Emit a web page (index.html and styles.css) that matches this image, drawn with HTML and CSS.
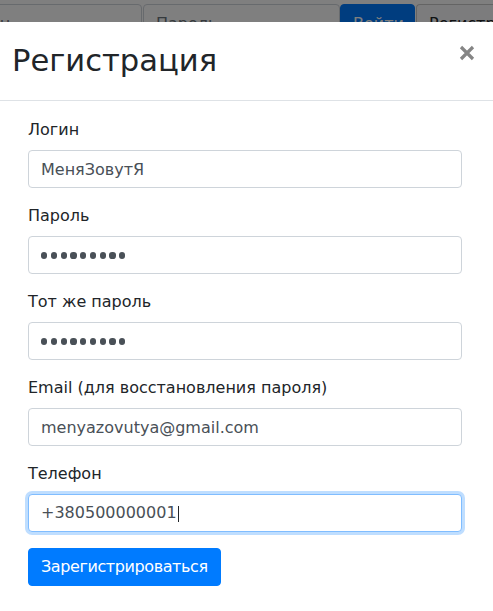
FILE: index.html
```html
<!DOCTYPE html>
<html lang="ru">
<head>
<meta charset="utf-8">
<title>Регистрация</title>
<link rel="stylesheet" href="styles.css">
</head>
<body>
<div class="page">
  <nav class="navbar">
    <input class="nav-input nav-login" type="text" placeholder="Логин">
    <input class="nav-input nav-pass" type="text" placeholder="Пароль">
    <button class="nav-btn nav-primary" type="button">Войти</button>
    <button class="nav-btn nav-light" type="button">Регистр</button>
  </nav>
</div>
<div class="backdrop"></div>
<div class="modal">
  <div class="modal-header">
    <h4 class="modal-title">Регистрация</h4>
    <button class="close" type="button" aria-label="Close">
      <svg width="16" height="16" viewBox="0 0 16 16"><path d="M2 2 L14 14 M14 2 L2 14" stroke="#858585" stroke-width="3.2" stroke-linecap="butt" fill="none"/></svg>
    </button>
  </div>
  <form class="modal-body">
    <div class="form-group">
      <label class="label">Логин</label>
      <input class="form-control" type="text" value="МеняЗовутЯ">
    </div>
    <div class="form-group">
      <label class="label">Пароль</label>
      <div class="form-control dots" aria-label="пароль"><i></i><i></i><i></i><i></i><i></i><i></i><i></i><i></i><i></i></div>
    </div>
    <div class="form-group">
      <label class="label">Тот же пароль</label>
      <div class="form-control dots" aria-label="пароль"><i></i><i></i><i></i><i></i><i></i><i></i><i></i><i></i><i></i></div>
    </div>
    <div class="form-group">
      <label class="label">Email (для восстановления пароля)</label>
      <input class="form-control" type="text" value="menyazovutya@gmail.com">
    </div>
    <div class="form-group">
      <label class="label">Телефон</label>
      <div class="form-control focused"><span>+380500000001</span><span class="caret"></span></div>
    </div>
    <button class="btn-primary" type="button">Зарегистрироваться</button>
  </form>
</div>
</body>
</html>
```

FILE: styles.css
```css
* { box-sizing: border-box; }
html, body {
  margin: 0;
  height: 100%;
  overflow: hidden;
  background: #fff;
  font-family: "DejaVu Sans", Verdana, sans-serif;
  font-size: 16px;
  color: #212529;
}
.page { height: 100%; }
.navbar {
  display: flex;
  padding-top: 4px;
  margin-left: -54px;
}
.nav-input {
  height: 38px;
  border: 1px solid #ced4da;
  border-radius: 4px;
  padding: 0 12px;
  font: 16px "DejaVu Sans", sans-serif;
  color: #495057;
  background: #fff;
}
.nav-input::placeholder { color: #6c757d; }
.nav-login { width: 196px; margin-right: 1px; }
.nav-pass { width: 197px; }
.nav-btn {
  height: 38px;
  border-radius: 4px;
  padding: 0 12px;
  font: 16px "DejaVu Sans", sans-serif;
  white-space: nowrap;
}
.nav-primary {
  width: 75px;
  background: #007bff;
  border: 1px solid #007bff;
  color: #fff;
}
.nav-light {
  margin-left: 1px;
  width: 77px;
  overflow: hidden;
  text-align: left;
  background: #f8f9fa;
  border: 1px solid #c8c8c8;
  border-right: 0;
  border-radius: 4px 0 0 4px;
  color: #212529;
}
.backdrop {
  position: fixed;
  inset: 0;
  background: rgba(0, 0, 0, 0.5);
}
.modal {
  position: absolute;
  top: 22px;
  left: 0;
  right: 0;
  bottom: 0;
  background: #fff;
}
.modal-header {
  display: flex;
  justify-content: space-between;
  align-items: flex-start;
  padding: 16px 18px 17px 12px;
  border-bottom: 1px solid #dee2e6;
}
.modal-title {
  margin: 0;
  font-size: 30.6px;
  line-height: 45px;
  font-weight: 400;
  color: #212529;
}
.close {
  margin-top: 7px;
  padding: 0;
  border: 0;
  background: transparent;
  width: 16px;
  height: 16px;
  display: block;
}
.close svg { display: block; }
.modal-body {
  display: block;
  margin: 0;
  padding: 17px 31px 16px 28px;
}
.form-group { margin-bottom: 16px; }
.label {
  display: block;
  margin-bottom: 8px;
  line-height: 24px;
  color: #212529;
}
.form-control {
  display: block;
  width: 100%;
  height: 38px;
  padding: 6px 12px;
  border: 1px solid #ced4da;
  border-radius: 4px;
  font: 16px/24px "DejaVu Sans", sans-serif;
  color: #495057;
  background: #fff;
}
.dots {
  display: flex;
  align-items: center;
  gap: 3.6px;
  padding-top: 7px;
}
.dots i {
  display: block;
  width: 6.2px;
  height: 6.2px;
  border-radius: 50%;
  background: #495057;
}
.focused {
  border-color: #80bdff;
  box-shadow: 0 0 0 3px rgba(0, 123, 255, 0.25);
  display: flex;
  align-items: center;
}
.caret {
  display: inline-block;
  width: 1px;
  height: 16px;
  background: #212529;
  margin-left: 1px;
  margin-top: 1px;
}
.btn-primary {
  display: inline-block;
  padding: 6px 12px;
  font: 16px/24px "DejaVu Sans", sans-serif;
  letter-spacing: -0.4px;
  color: #fff;
  background: #007bff;
  border: 1px solid #007bff;
  border-radius: 4px;
}
```
